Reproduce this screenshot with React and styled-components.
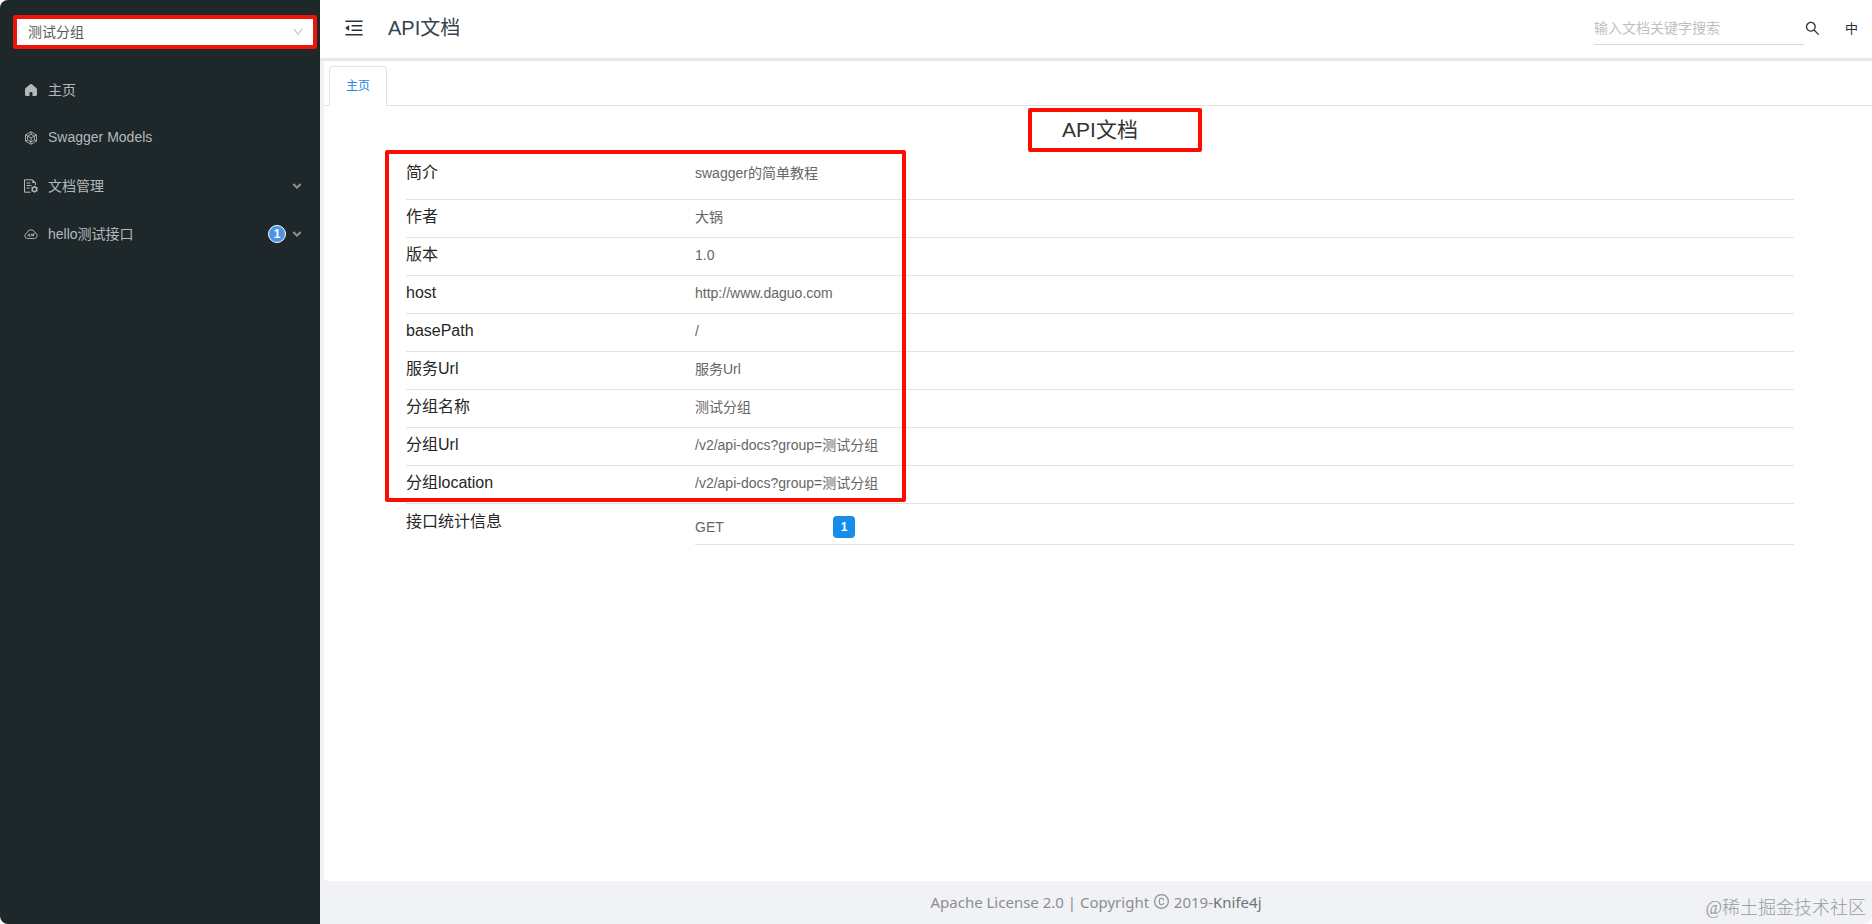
import React from "react";
import styled, { createGlobalStyle } from "styled-components";
import { AiOutlineMenuFold, AiOutlineSearch, AiOutlineCopyright, AiOutlineDown } from "react-icons/ai";

const GlobalStyle = createGlobalStyle`
    *{
        box-sizing: border-box;
    }
    body{
        margin: 0;
        background: #ffffff;
        font-family: "Liberation Sans", Arial, "Noto Sans CJK SC", sans-serif;
        font-size: 14px;
    }
    button, input, select{
        font-family: inherit;
    }
`;

const HomeIcon = () => (
    <svg width="14" height="14" viewBox="0 0 14 14" fill="currentColor" aria-hidden="true">
        <path d="M6.2 1.2a1.3 1.3 0 0 1 1.6 0l4.6 3.9c.4.4.6.8.6 1.3v5.2c0 .8-.5 1.4-1.3 1.4H8.500V10.400C8.500 9.500 7.900 9 7 9s-1.500.5-1.500 1.400V13H2.300c-.8 0-1.300-.6-1.300-1.400V6.400c0-.5.2-.9.6-1.300z" />
    </svg>
);

const ModelsIcon = () => (
    <svg width="14" height="14" viewBox="0 0 14 14" fill="none" stroke="currentColor" strokeWidth="0.9" aria-hidden="true">
        <path d="M7 .8l5.500 3.100v6.200L7 13.200l-5.500-3.100V3.900z" />
        <path d="M7 3.200l3.400 1.900v3.800L7 10.800 3.600 8.900V5.100z" />
        <path d="M7 .8v2.400M7 7v6.200M1.500 3.900L7 7l5.500-3.100M3.600 8.900l-2.100 1.200M10.400 8.900l2.100 1.200" />
    </svg>
);

const DocIcon = () => (
    <svg width="14" height="14" viewBox="0 0 14 14" fill="none" stroke="currentColor" aria-hidden="true">
        <path d="M11.500 6V4L8.500.8h-8v12.400h6" />
        <path d="M8.300.8V4h3.200z" fill="currentColor" stroke="none" />
        <path d="M2.500 4h4M2.500 6.500h5M2.500 9h3" />
        <circle cx="10.500" cy="10.200" r="2.300" strokeWidth="1.500" />
        <path d="M10.500 6.700v1M10.500 12.700v1M7.500 8.500l.8.500M12.700 11.400l.8.500M13.500 8.500l-.8.500M8.300 11.400l-.8.500" />
    </svg>
);

const CloudIcon = () => (
    <svg width="14" height="14" viewBox="0 0 14 14" fill="none" stroke="currentColor" strokeWidth="0.9" strokeLinejoin="round" aria-hidden="true">
        <path d="M3.400 11.500a2.800 2.800 0 0 1-.5-5.500 4.200 4.200 0 0 1 8.100-.2 2.900 2.900 0 0 1-.4 5.700z" />
        <path d="M3.700 9.200l1.600-2.400v2.400h1M6.900 9.200l1-2.400 1 2.400M9.500 9.200V6.900h1.200" />
    </svg>
);

const ArrowIcon = () => (
    <svg width="10" height="8" viewBox="0 0 10 8" fill="none" stroke="currentColor" strokeWidth="2" aria-hidden="true">
        <path d="M1.300 2L5 5.700 8.700 2" />
    </svg>
);

const menus = [
    { name: "主页", icon: <HomeIcon /> },
    { name: "Swagger Models", icon: <ModelsIcon /> },
    { name: "文档管理", icon: <DocIcon />, sub: true },
    { name: "hello测试接口", icon: <CloudIcon />, sub: true, count: 1 },
];

const infos = [
    { label: "简介", value: "swagger的简单教程" },
    { label: "作者", value: "大锅" },
    { label: "版本", value: "1.0" },
    { label: "host", value: "http://www.daguo.com" },
    { label: "basePath", value: "/" },
    { label: "服务Url", value: "服务Url" },
    { label: "分组名称", value: "测试分组" },
    { label: "分组Url", value: "/v2/api-docs?group=测试分组" },
    { label: "分组location", value: "/v2/api-docs?group=测试分组" },
];

function App() {
    return (
        <Layout>
            <GlobalStyle />
            <Sidebar>
                <GroupBox>
                    <GroupSelect aria-label="分组">
                        <option>测试分组</option>
                    </GroupSelect>
                    <AiOutlineDown size={12} />
                </GroupBox>
                <nav>
                    {menus.map(m => (
                        <MenuItem key={m.name} href="#">
                            {m.icon}
                            <span className="name">{m.name}</span>
                            {m.count && <CountBadge>{m.count}</CountBadge>}
                            {m.sub && <ArrowIcon />}
                        </MenuItem>
                    ))}
                </nav>
            </Sidebar>
            <Main>
                <Header>
                    <IconButton aria-label="收起菜单">
                        <AiOutlineMenuFold size={22} />
                    </IconButton>
                    <h1>API文档</h1>
                    <SearchInput type="text" aria-label="搜索" placeholder="输入文档关键字搜索" />
                    <IconButton aria-label="搜索">
                        <AiOutlineSearch size={17} />
                    </IconButton>
                    <LangButton>中</LangButton>
                </Header>
                <Content>
                    <Tabs>
                        <Tab>主页</Tab>
                    </Tabs>
                    <Title>
                        <span>API文档<TitleMark /></span>
                    </Title>
                    <InfoBox>
                        <InfoMark />
                        <InfoTable>
                            <tbody>
                                {infos.map(i => (
                                    <tr key={i.label}>
                                        <th scope="row">{i.label}</th>
                                        <td>{i.value}</td>
                                    </tr>
                                ))}
                                <tr className="stats">
                                    <th scope="row">接口统计信息</th>
                                    <td>
                                        <Stat>
                                            <span>GET</span>
                                            <b>1</b>
                                        </Stat>
                                    </td>
                                </tr>
                            </tbody>
                        </InfoTable>
                    </InfoBox>
                </Content>
                <Footer>
                    Apache License 2.0 | Copyright <AiOutlineCopyright size={17} /> 2019-<a href="#">Knife4j</a>
                </Footer>
            </Main>
            <Watermark>@稀土掘金技术社区</Watermark>
        </Layout>
    );
}

const Layout = styled.div`
    position: relative;
    display: flex;
    min-height: 100vh;
    border-radius: 8px;
    overflow: hidden;
    background: #f0f2f5;
`;

const Sidebar = styled.aside`
    flex: 0 0 320px;
    padding: 15px 0 0;
    background: #1e282b;
`;

const GroupBox = styled.div`
    position: relative;
    height: 34px;
    margin: 0 3px 17px 13px;
    border: 4px solid #ee1409;
    border-radius: 2px;
    background: #ffffff;
    svg{
        position: absolute;
        top: 7px;
        right: 9px;
        color: #b8b8b8;
        pointer-events: none;
    }
`;

const GroupSelect = styled.select`
    appearance: none;
    display: block;
    width: 100%;
    height: 26px;
    padding: 0 11px;
    border: 0;
    background: transparent;
    color: #5a5a5a;
    font-size: 14px;
`;

const MenuItem = styled.a`
    display: flex;
    align-items: center;
    height: 48px;
    padding: 0 18px 0 24px;
    color: #b3b9ba;
    text-decoration: none;
    .name{
        flex: 1;
        margin-left: 10px;
        padding-bottom: 2px;
    }
    .name ~ svg{
        color: #8b9395;
    }
`;

const CountBadge = styled.span`
    width: 18px;
    height: 18px;
    margin-right: 6px;
    border: 1px solid #ffffff;
    border-radius: 50%;
    background: #4b94e6;
    color: #ffffff;
    font-size: 12px;
    font-weight: 700;
    line-height: 16px;
    text-align: center;
`;

const Main = styled.div`
    flex: 1;
    min-width: 0;
    display: flex;
    flex-direction: column;
`;

const Header = styled.header`
    display: flex;
    align-items: center;
    height: 61px;
    padding: 0 14px 2px 23px;
    border-bottom: 3px solid #e7e8ea;
    background: #ffffff;
    color: #34444f;
    h1{
        flex: 1;
        margin: 0 0 0 23px;
        font-size: 20px;
        font-weight: 400;
        line-height: 30px;
    }
`;

const IconButton = styled.button`
    display: flex;
    padding: 0;
    border: 0;
    background: none;
    color: #27333b;
`;

const SearchInput = styled.input`
    width: 210px;
    height: 34px;
    padding: 0;
    border: 0;
    border-bottom: 1px solid #d9d9d9;
    outline: 0;
    background: none;
    font-size: 14px;
    &::placeholder{
        color: #bfbfbf;
    }
`;

const LangButton = styled(IconButton)`
    margin-left: 24px;
    padding-bottom: 2px;
    font-size: 13px;
`;

const Content = styled.main`
    flex: 1;
    margin-left: 4px;
    border-radius: 0 0 0 4px;
    background: #ffffff;
`;

const Tabs = styled.div`
    display: flex;
    align-items: flex-end;
    height: 45px;
    padding-left: 5px;
    box-shadow: inset 0 -1px #e3e3e3;
`;

const Tab = styled.button`
    width: 58px;
    height: 40px;
    padding: 0 0 4px;
    border: 1px solid #e3e3e3;
    border-bottom: 0;
    border-radius: 4px 4px 0 0;
    background: #ffffff;
    color: #1c87e0;
    font-size: 12px;
`;

const Title = styled.h2`
    margin: 0;
    padding: 8px 0 12px 4px;
    color: #333333;
    font-size: 21px;
    font-weight: 400;
    line-height: 32px;
    text-align: center;
    span{
        position: relative;
    }
`;

/* highlight frames drawn over the page */
const Mark = styled.i`
    position: absolute;
    border: 4px solid #fc0d04;
    border-radius: 2px;
    pointer-events: none;
`;

const TitleMark = styled(Mark)`
    top: -10px;
    left: -34px;
    width: 174px;
    height: 44px;
`;

const InfoBox = styled.section`
    position: relative;
    padding: 0 78px 0 82px;
`;

const InfoMark = styled(Mark)`
    top: -8px;
    left: 61px;
    width: 521px;
    height: 352px;
`;

const InfoTable = styled.table`
    width: 100%;
    border-spacing: 0;
    table-layout: fixed;
    th, td{
        height: 38px;
        padding: 0 0 4px;
        border-bottom: 1px solid #e3e3e3;
        font-weight: 400;
        text-align: left;
    }
    th{
        width: 289px;
        color: #262626;
        font-size: 16px;
        line-height: 24px;
    }
    td{
        color: #666666;
        font-size: 14px;
        line-height: 24px;
    }
    tr:first-child > *{
        height: 42px;
        padding-bottom: 12px;
    }
    .stats > *{
        padding: 0;
        border-bottom: 0;
    }
    .stats th{
        padding-top: 6px;
        vertical-align: top;
    }
`;

const Stat = styled.div`
    display: flex;
    align-items: center;
    height: 41px;
    padding-top: 6px;
    border-bottom: 1px solid #e3e3e3;
    span{
        width: 138px;
    }
    b{
        width: 22px;
        height: 22px;
        border-radius: 4px;
        background: #168ceb;
        color: #ffffff;
        font-size: 12px;
        line-height: 22px;
        text-align: center;
    }
`;

const Footer = styled.footer`
    display: flex;
    align-items: center;
    justify-content: center;
    height: 43px;
    padding-bottom: 2px;
    white-space: pre;
    color: #8c8e91;
    font-family: "Noto Sans", "Open Sans", sans-serif;
    font-size: 15px;
    a{
        color: #6f7276;
        text-decoration: none;
    }
`;

const Watermark = styled.div`
    position: absolute;
    right: 6px;
    bottom: 2px;
    color: #999b9e;
    font-family: "Liberation Serif", "Noto Sans CJK SC", serif;
    font-size: 18px;
    font-weight: 300;
    line-height: 28px;
`;

export default App;
